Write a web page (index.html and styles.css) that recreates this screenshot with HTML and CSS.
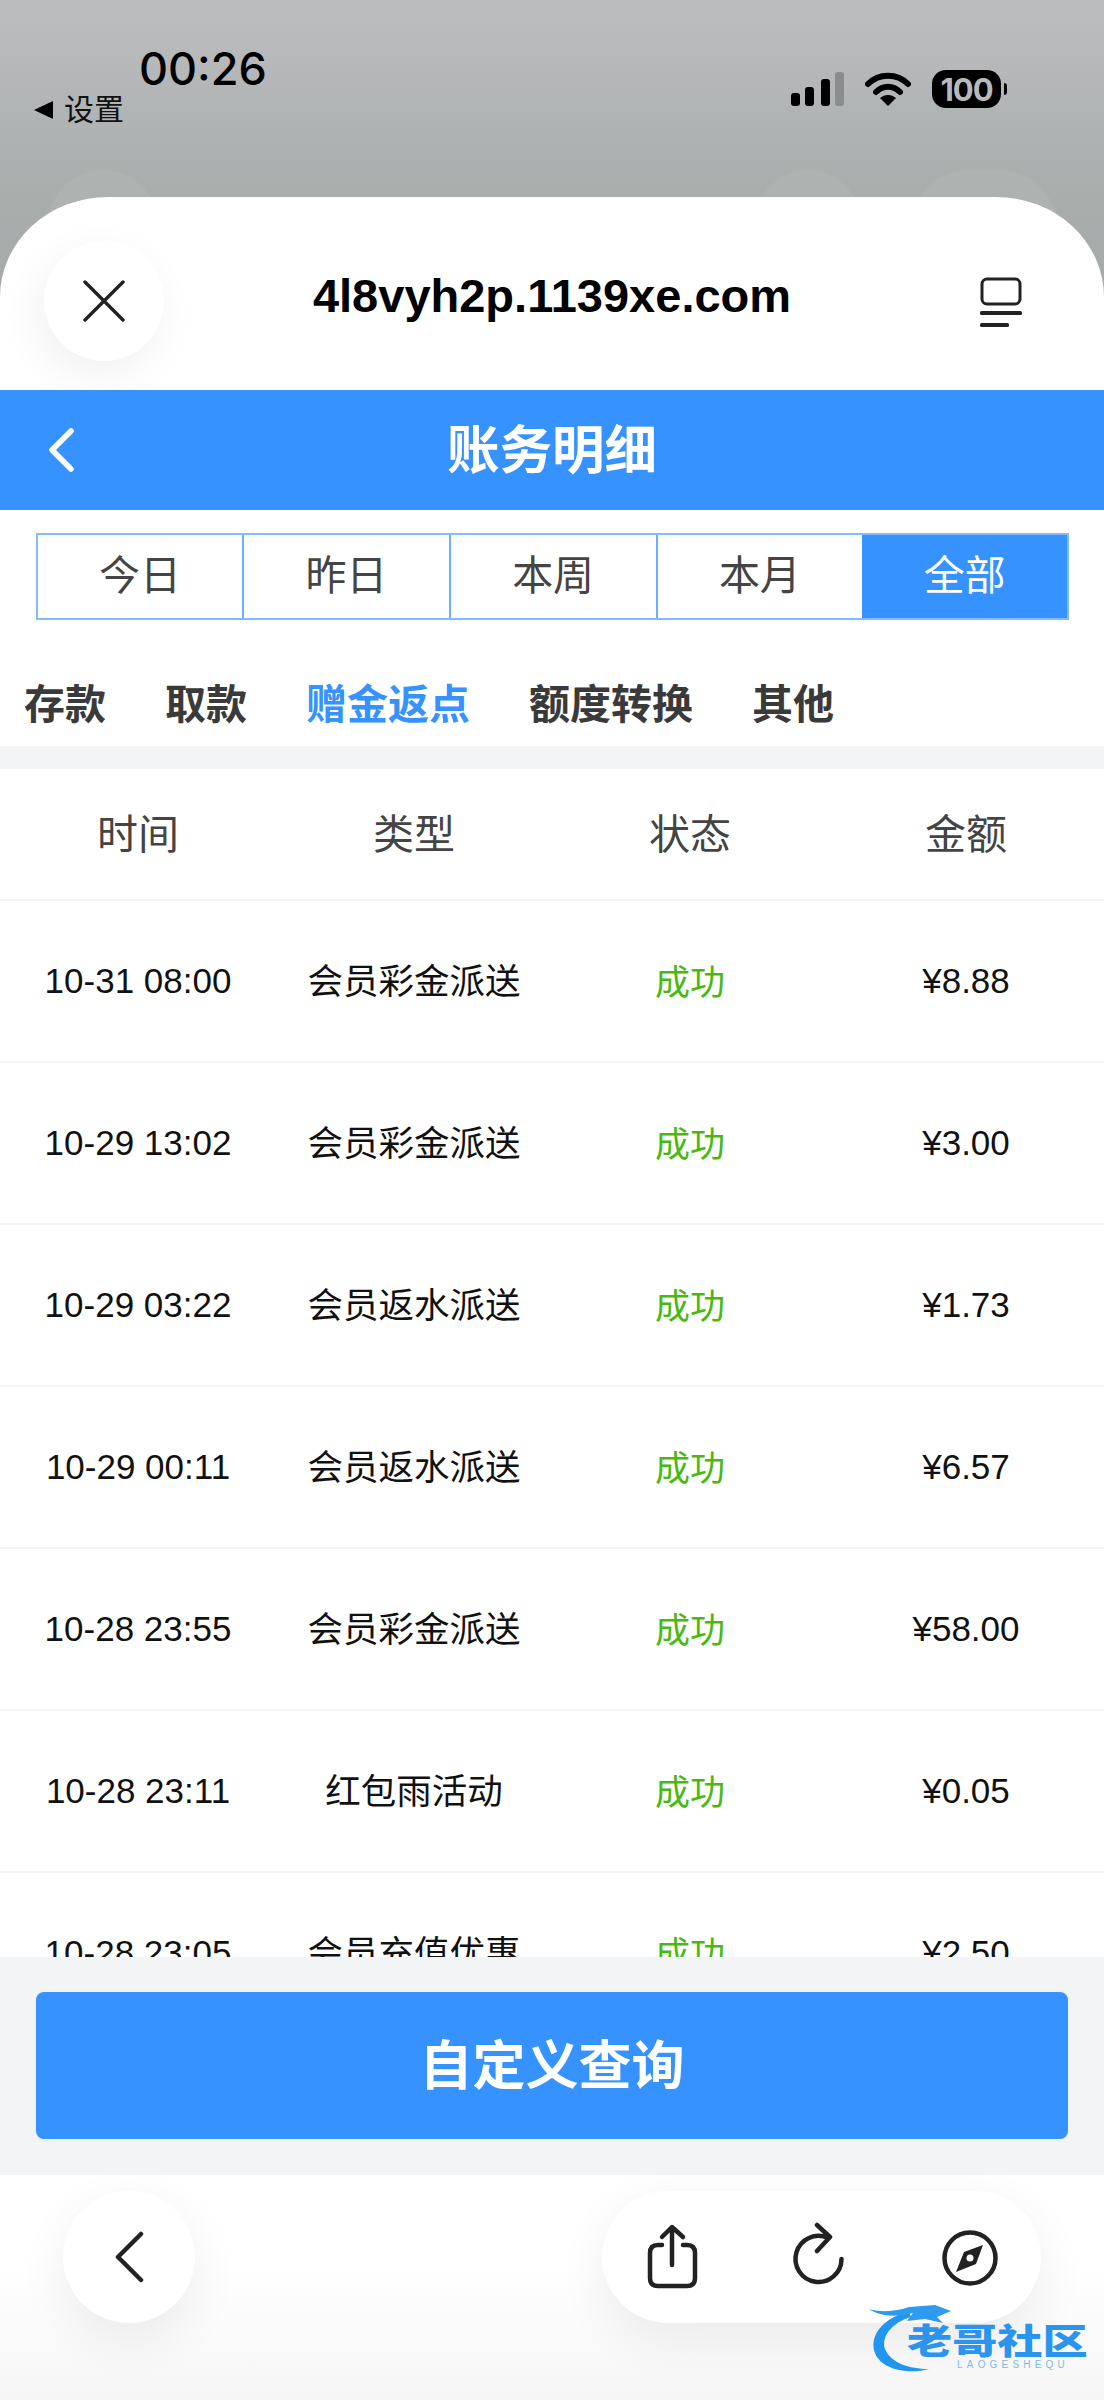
FILE: index.html
```html
<!DOCTYPE html>
<html lang="zh-CN">

<head>
    <meta charset="UTF-8">
    <meta name="viewport" content="width=device-width, initial-scale=1.0">
    <title>账务明细</title>
    <link rel="stylesheet" href="styles.css">
</head>

<body>

    <!-- status bar -->
    <div class="status-bar">
        <div class="ghost ghost-a"></div>
        <div class="ghost ghost-b"></div>
        <div class="ghost ghost-c"></div>

        <div class="status-left">
            <div class="clock">00:26</div>
            <div class="back-app"><span class="back-tri"></span>设置</div>
        </div>
        <div class="status-right">
            <svg class="signal" width="53" height="34" viewBox="0 0 53 34">
                <rect x="0" y="21" width="9" height="13" rx="3" fill="#000" />
                <rect x="14" y="15" width="9" height="19" rx="3" fill="#000" />
                <rect x="30" y="7" width="9" height="27" rx="3" fill="#000" />
                <rect x="44" y="0" width="9" height="34" rx="3" fill="#8b8c8e" />
            </svg>
            <svg class="wifi" width="46" height="34" viewBox="0 0 46 34">
                <path d="M3 12 C14 1 32 1 43 12" fill="none" stroke="#000" stroke-width="6" stroke-linecap="round" />
                <path d="M11 20 C18 13 28 13 35 20" fill="none" stroke="#000" stroke-width="6" stroke-linecap="round" />
                <path d="M15 26 C20 22 26 22 31 26 L23 34 Z" fill="#000" />
            </svg>
            <div class="battery"><span class="battery-num">100</span></div>
            <span class="battery-nub"></span>
        </div>
    </div>

    <div class="sheet">
        <!-- browser top bar -->
        <div class="url-bar">
            <div class="round-btn">
                <svg width="42" height="42" viewBox="0 0 42 42">
                    <path d="M2 2 L40 40 M40 2 L2 40" fill="none" stroke="#222" stroke-width="3.4" stroke-linecap="round" />
                </svg>
            </div>
            <div class="url-text">4l8vyh2p.1139xe.com</div>
            <svg class="reader" width="42" height="50" viewBox="0 0 42 50">
                <rect x="2" y="2" width="38" height="25" rx="5" fill="none" stroke="#222" stroke-width="3" />
                <rect x="0" y="34" width="42" height="4" rx="1.5" fill="#222" />
                <rect x="0" y="46" width="29" height="4" rx="1.5" fill="#222" />
            </svg>
        </div>

        <!-- page header -->
        <div class="page-head">
            <svg class="head-back" width="28" height="44" viewBox="0 0 28 44">
                <path d="M24 3 L5 22 L24 41" fill="none" stroke="#fff" stroke-width="5.5" stroke-linecap="round" stroke-linejoin="round" />
            </svg>
            <h1 class="page-title">账务明细</h1>
        </div>

        <div class="range-tabs">
            <div class="range-tab">今日</div>
            <div class="range-tab">昨日</div>
            <div class="range-tab">本周</div>
            <div class="range-tab">本月</div>
            <div class="range-tab active">全部</div>
        </div>

        <div class="type-tabs">
            <div class="type-tab">存款</div>
            <div class="type-tab">取款</div>
            <div class="type-tab active">赠金返点</div>
            <div class="type-tab">额度转换</div>
            <div class="type-tab">其他</div>
        </div>

        <div class="divider"></div>

        <!-- records -->
        <div class="records">
            <div class="row row-head">
                <div>时间</div>
                <div>类型</div>
                <div>状态</div>
                <div>金额</div>
            </div>
            <div class="row">
                <div>10-31 08:00</div>
                <div class="kind">会员彩金派送</div>
                <div class="ok">成功</div>
                <div>¥8.88</div>
            </div>
            <div class="row">
                <div>10-29 13:02</div>
                <div class="kind">会员彩金派送</div>
                <div class="ok">成功</div>
                <div>¥3.00</div>
            </div>
            <div class="row">
                <div>10-29 03:22</div>
                <div class="kind">会员返水派送</div>
                <div class="ok">成功</div>
                <div>¥1.73</div>
            </div>
            <div class="row">
                <div>10-29 00:11</div>
                <div class="kind">会员返水派送</div>
                <div class="ok">成功</div>
                <div>¥6.57</div>
            </div>
            <div class="row">
                <div>10-28 23:55</div>
                <div class="kind">会员彩金派送</div>
                <div class="ok">成功</div>
                <div>¥58.00</div>
            </div>
            <div class="row">
                <div>10-28 23:11</div>
                <div class="kind">红包雨活动</div>
                <div class="ok">成功</div>
                <div>¥0.05</div>
            </div>
            <div class="row">
                <div>10-28 23:05</div>
                <div class="kind">会员充值优惠</div>
                <div class="ok">成功</div>
                <div>¥2.50</div>
            </div>
        </div>

        <div class="query-bar">
            <button class="query-btn">自定义查询</button>
        </div>

        <!-- browser bottom bar -->
        <div class="bottom-bar">
            <div class="bottom-back">
                <svg width="32" height="52" viewBox="0 0 32 52">
                    <path d="M28 3 L5 26 L28 49" fill="none" stroke="#222" stroke-width="4.5" stroke-linecap="round" stroke-linejoin="round" />
                </svg>
            </div>
            <div class="bottom-pill">
                <svg width="60" height="70" viewBox="0 0 60 70">
                    <path d="M20 23 H16 Q8 23 8 31 V56 Q8 64 16 64 H45 Q53 64 53 56 V31 Q53 23 45 23 H41" fill="none" stroke="#222" stroke-width="4.5" stroke-linecap="round" />
                    <path d="M30 43 V6 M20 15 L30 5 L41 15" fill="none" stroke="#222" stroke-width="4.5" stroke-linecap="round" stroke-linejoin="round" />
                </svg>
                <svg width="60" height="70" viewBox="0 0 60 70">
                    <path d="M50.5 37 A23 23 0 1 1 37 16" fill="none" stroke="#222" stroke-width="4.5" stroke-linecap="round" />
                    <path d="M26 3 L39 15 L26 29" fill="none" stroke="#222" stroke-width="4.5" stroke-linecap="round" stroke-linejoin="round" />
                </svg>
                <svg width="60" height="70" viewBox="0 0 60 70">
                    <circle cx="30" cy="36" r="25.5" fill="none" stroke="#222" stroke-width="4.5" />
                    <path d="M43 23 L36 42 L16 50 L24 30 Z" fill="#222" />
                    <circle cx="30" cy="36" r="3.5" fill="#fff" />
                </svg>
            </div>
        </div>
    </div>

    <!-- watermark sits over the bottom bar -->
    <div class="watermark">
        <svg class="wm-dragon" width="110" height="74" viewBox="0 0 110 74">
            <path d="M42 8 C14 16 2 34 8 50 C14 66 40 72 62 66 C42 66 24 60 18 46 C14 34 24 20 44 14 Z" fill="#2196ee" />
            <path d="M2 6 C16 10 30 8 42 4 L68 2 L84 8 L70 14 L76 20 L58 16 L40 18 L46 10 C30 14 14 14 2 6 Z" fill="#2f9bef" />
        </svg>
        <div class="wm-name">老哥社区</div>
        <div class="wm-sub">LAOGESHEQU</div>
    </div>

</body>

</html>
```

FILE: styles.css
```css
* {
    box-sizing: border-box;
}

body {
    margin: 0;
    width: 1104px;
    height: 2400px;
    overflow: hidden;
    position: relative;
    font-family: "Liberation Sans", "Noto Sans CJK SC", sans-serif;
    background: linear-gradient(#bcbdbf, #a9adac 197px, #a6a9a9 300px);
    display: flex;
    flex-direction: column;
}

/* status bar */
.status-bar {
    height: 197px;
    flex: none;
    display: flex;
    justify-content: space-between;
    position: relative;
}

.ghost {
    position: absolute;
    top: 170px;
    height: 120px;
    border-radius: 60px;
    background: #aeb2b1;
}

.ghost-a {
    left: 48px;
    width: 110px;
}

.ghost-b {
    left: 755px;
    width: 106px;
}

.ghost-c {
    left: 910px;
    width: 148px;
}

.status-left {
    position: relative;
    padding: 43px 0 0 34px;
}

.clock {
    font-family: Inter, "Liberation Sans", sans-serif;
    font-size: 45px;
    font-weight: 500;
    line-height: 52px;
    margin-left: 105px;
    color: #000;
}

.back-app {
    display: flex;
    align-items: center;
    gap: 11px;
    font-size: 30px;
    line-height: 30px;
    color: #111;
}

.back-tri {
    width: 0;
    height: 0;
    border-top: 9px solid transparent;
    border-bottom: 9px solid transparent;
    border-right: 19px solid #000;
}

.status-right {
    position: relative;
    display: flex;
    align-items: center;
    height: 38px;
    margin: 70px 97px 0 0;
}

.signal {
    margin-right: 21px;
}

.wifi {
    margin-right: 21px;
}

.battery {
    width: 69px;
    height: 38px;
    background: #000;
    border-radius: 14px;
    display: flex;
    align-items: center;
    justify-content: center;
}

.battery-num {
    font-family: Inter, "Liberation Sans", sans-serif;
    font-size: 31px;
    font-weight: 700;
    letter-spacing: -1px;
    color: #b8b9bb;
}

.battery-nub {
    width: 3px;
    height: 12px;
    margin-left: 3px;
    background: #000;
    border-radius: 0 3px 3px 0;
}

/* sheet */
.sheet {
    flex: 1;
    min-height: 0;
    position: relative;
    display: flex;
    flex-direction: column;
    background: #fff;
    border-radius: 108px 108px 0 0 / 100px 100px 0 0;
}

.url-bar {
    height: 193px;
    flex: none;
    position: relative;
    display: flex;
    align-items: center;
    justify-content: center;
}

.round-btn {
    position: absolute;
    left: 44px;
    top: 44px;
    width: 120px;
    height: 120px;
    border-radius: 50%;
    background: #fff;
    box-shadow: -6px 14px 44px rgba(0, 0, 0, 0.06);
    display: flex;
    align-items: center;
    justify-content: center;
}

.url-text {
    font-size: 47px;
    font-weight: 700;
    color: #000;
    margin-top: 4px;
}

.reader {
    position: absolute;
    left: 980px;
    top: 80px;
}

.page-head {
    height: 120px;
    flex: none;
    position: relative;
    background: #3592ff;
    display: flex;
    align-items: center;
    justify-content: center;
}

.head-back {
    position: absolute;
    left: 47px;
    top: 38px;
}

.page-title {
    margin: 0;
    padding-bottom: 8px;
    font-size: 52.5px;
    font-weight: 700;
    color: #fff;
}

.range-tabs {
    display: flex;
    height: 87px;
    flex: none;
    margin: 23px 35px 0 36px;
    border: 2px solid #83bbff;
}

.range-tab {
    flex: 1;
    display: flex;
    align-items: center;
    justify-content: center;
    padding-bottom: 9px;
    font-size: 41px;
    color: #444;
    border-left: 2px solid #6eb0ff;
}

.range-tab:first-child {
    flex: 0 0 204px;
    border-left: 0;
}

.range-tab.active {
    background: #3592ff;
    border-left: 0;
    color: #fff;
}

.type-tabs {
    height: 126px;
    flex: none;
    padding: 36px 0 0 24px;
    display: flex;
    align-items: center;
    gap: 59px;
}

.type-tab {
    font-size: 41px;
    font-weight: 700;
    color: #3a3a3a;
}

.type-tab.active {
    color: #3592ff;
}

.divider {
    height: 23px;
    flex: none;
    background: #f3f4f5;
}

/* records */
.records {
    flex: 1;
    min-height: 0;
    overflow: hidden;
}

.row {
    display: grid;
    grid-template-columns: repeat(4, 276px);
    height: 162px;
    align-items: center;
    text-align: center;
    font-size: 35px;
    color: #111;
    border-bottom: 2px solid #f3f3f3;
}

.row-head {
    height: 132px;
    font-size: 41px;
    color: #444;
    padding-bottom: 7px;
}

.kind {
    font-size: 35.5px;
    padding-bottom: 6px;
}

.ok {
    color: #48b90e;
    padding-bottom: 4px;
}

.query-bar {
    height: 218px;
    flex: none;
    padding: 35px 36px 36px;
    background: #f3f4f5;
}

.query-btn {
    display: block;
    width: 100%;
    height: 147px;
    border: 0;
    padding: 0 0 8px;
    border-radius: 8px;
    background: #3592ff;
    color: #fff;
    font-family: inherit;
    font-size: 53px;
    font-weight: 700;
}

/* bottom bar */
.bottom-bar {
    height: 225px;
    flex: none;
    padding: 16px 63px 0;
    display: flex;
    justify-content: space-between;
    align-items: flex-start;
    background: linear-gradient(#fff 40%, #f6f6f6);
}

.bottom-back {
    width: 132px;
    height: 132px;
    border-radius: 50%;
    background: #fff;
    box-shadow: 0 16px 50px rgba(0, 0, 0, 0.07);
    display: flex;
    align-items: center;
    justify-content: center;
}

.bottom-pill {
    width: 439px;
    height: 132px;
    padding-left: 40px;
    border-radius: 66px;
    background: #fff;
    box-shadow: 0 16px 50px rgba(0, 0, 0, 0.07);
    display: flex;
    align-items: center;
    gap: 89px;
}

/* watermark */
.watermark {
    position: absolute;
    left: 867px;
    top: 2303px;
    width: 224px;
    height: 74px;
}

.wm-dragon {
    position: absolute;
    left: 0;
    top: 0;
}

.wm-name {
    position: absolute;
    left: 40px;
    top: 19px;
    width: 140px;
    font-size: 35px;
    line-height: 40px;
    font-weight: 900;
    white-space: nowrap;
    color: #2b95ee;
    transform: scaleX(1.29);
    transform-origin: left center;
}

.wm-sub {
    position: absolute;
    left: 90px;
    top: 56px;
    font-size: 10px;
    letter-spacing: 4.2px;
    white-space: nowrap;
    color: #7fb8ea;
}
```
